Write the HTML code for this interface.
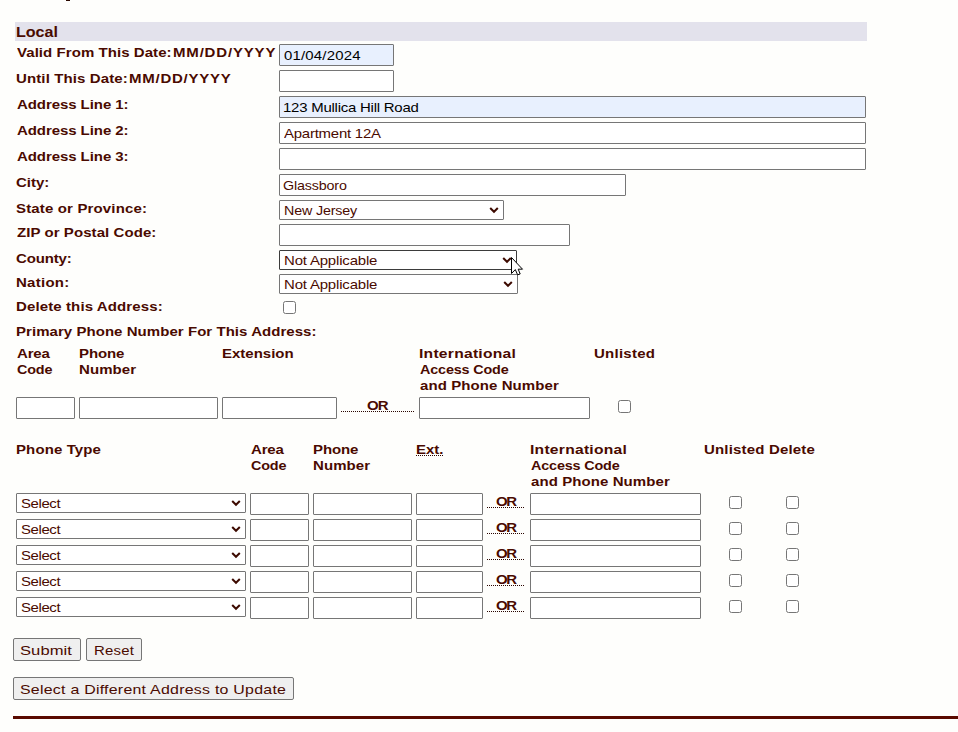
<!DOCTYPE html>
<html><head><meta charset="utf-8"><style>
html,body{margin:0;padding:0;}
body{width:958px;height:732px;overflow:hidden;position:relative;background:#fefefc;font-family:"Liberation Sans",sans-serif;}
.a{position:absolute;}
.t{position:absolute;white-space:nowrap;line-height:16px;transform-origin:0 0;}
.lab{font-weight:bold;font-size:12.5px;color:#4a0a00;}
.hdr{font-weight:bold;font-size:14px;color:#4a0a00;}
.inp{font-weight:normal;font-size:13.6px;color:#4a0a00;}
.box{position:absolute;box-sizing:border-box;border:1px solid #767676;border-radius:1px;background:#fff;}
.af{background:#e8f0fe;}
.cb{position:absolute;box-sizing:border-box;width:13px;height:13px;border:1px solid #767676;border-radius:2.5px;background:#fff;}
.btn{position:absolute;box-sizing:border-box;border:1px solid #767676;border-radius:2px;background:#efefef;}
.dot{position:absolute;height:0;border-bottom:1px dotted #2a0500;}
.chev{position:absolute;width:11px;height:8px;}

</style></head><body>

<div class="a hb" style="left:15px;top:22px;width:852px;height:19px;background:#e3e2ec"></div>
<div class="a hb" style="left:66px;top:0px;width:4px;height:1px;background:#2a0800"></div>
<div class="box af" style="left:279px;top:44px;width:115px;height:22px;"></div>
<div class="box" style="left:279px;top:70px;width:115px;height:22px;"></div>
<div class="box af" style="left:279px;top:96px;width:587px;height:22px;"></div>
<div class="box" style="left:279px;top:122px;width:587px;height:22px;"></div>
<div class="box" style="left:279px;top:148px;width:587px;height:22px;"></div>
<div class="box" style="left:279px;top:174px;width:347px;height:22px;"></div>
<div class="box" style="left:279px;top:224px;width:291px;height:22px;"></div>
<div class="box" style="left:279px;top:200px;width:225px;height:20px;"></div>
<svg class="chev" style="left:489px;top:206px" width="11" height="8" viewBox="0 0 11 8"><path d="M1.2 2 L5 5.8 L8.8 2" fill="none" stroke="#3d0a00" stroke-width="2" stroke-linecap="butt"/></svg>
<div class="box" style="left:279px;top:250px;width:238px;height:20px;border-color:#3b3b3b"></div>
<svg class="chev" style="left:502px;top:256px" width="11" height="8" viewBox="0 0 11 8"><path d="M1.2 2 L5 5.8 L8.8 2" fill="none" stroke="#3d0a00" stroke-width="2" stroke-linecap="butt"/></svg>
<div class="box" style="left:279px;top:274px;width:239px;height:20px;"></div>
<svg class="chev" style="left:503px;top:280px" width="11" height="8" viewBox="0 0 11 8"><path d="M1.2 2 L5 5.8 L8.8 2" fill="none" stroke="#3d0a00" stroke-width="2" stroke-linecap="butt"/></svg>
<div class="cb" style="left:283px;top:301px"></div>
<div class="box" style="left:16px;top:397px;width:59px;height:22px;"></div>
<div class="box" style="left:79px;top:397px;width:139px;height:22px;"></div>
<div class="box" style="left:222px;top:397px;width:115px;height:22px;"></div>
<div class="box" style="left:419px;top:397px;width:171px;height:22px;"></div>
<div class="cb" style="left:618px;top:400px"></div>
<div class="dot" style="left:341px;top:411px;width:73px"></div>
<div class="box" style="left:16px;top:493px;width:230px;height:20px;"></div>
<svg class="chev" style="left:231px;top:499px" width="11" height="8" viewBox="0 0 11 8"><path d="M1.2 2 L5 5.8 L8.8 2" fill="none" stroke="#3d0a00" stroke-width="2" stroke-linecap="butt"/></svg>
<div class="box" style="left:250px;top:493px;width:59px;height:22px;"></div>
<div class="box" style="left:313px;top:493px;width:99px;height:22px;"></div>
<div class="box" style="left:416px;top:493px;width:67px;height:22px;"></div>
<div class="box" style="left:530px;top:493px;width:171px;height:22px;"></div>
<div class="dot" style="left:487px;top:507px;width:37px"></div>
<div class="cb" style="left:729px;top:496px"></div>
<div class="cb" style="left:786px;top:496px"></div>
<div class="box" style="left:16px;top:519px;width:230px;height:20px;"></div>
<svg class="chev" style="left:231px;top:525px" width="11" height="8" viewBox="0 0 11 8"><path d="M1.2 2 L5 5.8 L8.8 2" fill="none" stroke="#3d0a00" stroke-width="2" stroke-linecap="butt"/></svg>
<div class="box" style="left:250px;top:519px;width:59px;height:22px;"></div>
<div class="box" style="left:313px;top:519px;width:99px;height:22px;"></div>
<div class="box" style="left:416px;top:519px;width:67px;height:22px;"></div>
<div class="box" style="left:530px;top:519px;width:171px;height:22px;"></div>
<div class="dot" style="left:487px;top:533px;width:37px"></div>
<div class="cb" style="left:729px;top:522px"></div>
<div class="cb" style="left:786px;top:522px"></div>
<div class="box" style="left:16px;top:545px;width:230px;height:20px;"></div>
<svg class="chev" style="left:231px;top:551px" width="11" height="8" viewBox="0 0 11 8"><path d="M1.2 2 L5 5.8 L8.8 2" fill="none" stroke="#3d0a00" stroke-width="2" stroke-linecap="butt"/></svg>
<div class="box" style="left:250px;top:545px;width:59px;height:22px;"></div>
<div class="box" style="left:313px;top:545px;width:99px;height:22px;"></div>
<div class="box" style="left:416px;top:545px;width:67px;height:22px;"></div>
<div class="box" style="left:530px;top:545px;width:171px;height:22px;"></div>
<div class="dot" style="left:487px;top:559px;width:37px"></div>
<div class="cb" style="left:729px;top:548px"></div>
<div class="cb" style="left:786px;top:548px"></div>
<div class="box" style="left:16px;top:571px;width:230px;height:20px;"></div>
<svg class="chev" style="left:231px;top:577px" width="11" height="8" viewBox="0 0 11 8"><path d="M1.2 2 L5 5.8 L8.8 2" fill="none" stroke="#3d0a00" stroke-width="2" stroke-linecap="butt"/></svg>
<div class="box" style="left:250px;top:571px;width:59px;height:22px;"></div>
<div class="box" style="left:313px;top:571px;width:99px;height:22px;"></div>
<div class="box" style="left:416px;top:571px;width:67px;height:22px;"></div>
<div class="box" style="left:530px;top:571px;width:171px;height:22px;"></div>
<div class="dot" style="left:487px;top:585px;width:37px"></div>
<div class="cb" style="left:729px;top:574px"></div>
<div class="cb" style="left:786px;top:574px"></div>
<div class="box" style="left:16px;top:597px;width:230px;height:20px;"></div>
<svg class="chev" style="left:231px;top:603px" width="11" height="8" viewBox="0 0 11 8"><path d="M1.2 2 L5 5.8 L8.8 2" fill="none" stroke="#3d0a00" stroke-width="2" stroke-linecap="butt"/></svg>
<div class="box" style="left:250px;top:597px;width:59px;height:22px;"></div>
<div class="box" style="left:313px;top:597px;width:99px;height:22px;"></div>
<div class="box" style="left:416px;top:597px;width:67px;height:22px;"></div>
<div class="box" style="left:530px;top:597px;width:171px;height:22px;"></div>
<div class="dot" style="left:487px;top:611px;width:37px"></div>
<div class="cb" style="left:729px;top:600px"></div>
<div class="cb" style="left:786px;top:600px"></div>
<div class="dot" style="left:416px;top:455px;width:27px"></div>
<div class="btn" style="left:13px;top:638px;width:68px;height:23px;"></div>
<div class="btn" style="left:86px;top:638px;width:56px;height:23px;"></div>
<div class="btn" style="left:13px;top:677px;width:281px;height:23px;"></div>
<div class="a hb" style="left:13px;top:716px;width:945px;height:3px;background:#5a0a00"></div>
<svg class="a cur" style="left:511px;top:257px" width="14" height="21" viewBox="0 0 14 21"><path d="M0.5 0.5 L0.5 16.5 L4.3 12.6 L6.6 17.8 L9.2 17 L7.2 12.2 L11.5 12.2 Z" fill="#fff" stroke="#000" stroke-width="1" stroke-linejoin="miter"/></svg>
<span id="t_local" class="t hdr" style="left:16.00px;top:24.00px;letter-spacing:-0.043px;transform:scaleX(1.15)">Local</span>
<span id="t_valid" class="t lab" style="left:17.00px;top:45.00px;letter-spacing:0.050px;transform:scaleX(1.2)">Valid From This Date:</span>
<span id="t_valid2" class="t lab" style="left:172.60px;top:45.00px;letter-spacing:0.685px;transform:scaleX(1.2)">MM/DD/YYYY</span>
<span id="t_until" class="t lab" style="left:16.00px;top:71.00px;letter-spacing:0.100px;transform:scaleX(1.2)">Until This Date:</span>
<span id="t_until2" class="t lab" style="left:129.00px;top:71.00px;letter-spacing:0.630px;transform:scaleX(1.2)">MM/DD/YYYY</span>
<span id="t_a1" class="t lab" style="left:17.00px;top:97.00px;letter-spacing:-0.060px;transform:scaleX(1.2)">Address Line 1:</span>
<span id="t_a2" class="t lab" style="left:17.00px;top:123.00px;letter-spacing:-0.060px;transform:scaleX(1.2)">Address Line 2:</span>
<span id="t_a3" class="t lab" style="left:17.00px;top:149.00px;letter-spacing:-0.060px;transform:scaleX(1.2)">Address Line 3:</span>
<span id="t_city" class="t lab" style="left:16.00px;top:175.00px;letter-spacing:0.000px;transform:scaleX(1.2)">City:</span>
<span id="t_state" class="t lab" style="left:16.00px;top:201.00px;letter-spacing:0.127px;transform:scaleX(1.2)">State or Province:</span>
<span id="t_zip" class="t lab" style="left:17.00px;top:225.00px;letter-spacing:0.056px;transform:scaleX(1.2)">ZIP or Postal Code:</span>
<span id="t_county" class="t lab" style="left:16.00px;top:251.00px;letter-spacing:-0.139px;transform:scaleX(1.2)">County:</span>
<span id="t_nation" class="t lab" style="left:16.00px;top:275.00px;letter-spacing:0.222px;transform:scaleX(1.2)">Nation:</span>
<span id="t_del" class="t lab" style="left:16.00px;top:299.00px;letter-spacing:0.096px;transform:scaleX(1.2)">Delete this Address:</span>
<span id="t_prim" class="t lab" style="left:16.00px;top:324.00px;letter-spacing:0.041px;transform:scaleX(1.2)">Primary Phone Number For This Address:</span>
<span id="t_area1" class="t lab" style="left:16.50px;top:345.50px;letter-spacing:-0.167px;transform:scaleX(1.2)">Area</span>
<span id="t_code1" class="t lab" style="left:16.50px;top:361.50px;letter-spacing:-0.152px;transform:scaleX(1.15)">Code</span>
<span id="t_ph1" class="t lab" style="left:78.50px;top:345.50px;letter-spacing:-0.083px;transform:scaleX(1.2)">Phone</span>
<span id="t_num1" class="t lab" style="left:78.50px;top:361.50px;letter-spacing:0.067px;transform:scaleX(1.2)">Number</span>
<span id="t_ext1" class="t lab" style="left:222.00px;top:345.50px;letter-spacing:0.000px;transform:scaleX(1.2)">Extension</span>
<span id="t_int1" class="t lab" style="left:419.00px;top:345.50px;letter-spacing:0.207px;transform:scaleX(1.25)">International</span>
<span id="t_acc1" class="t lab" style="left:420.00px;top:361.50px;letter-spacing:-0.137px;transform:scaleX(1.15)">Access Code</span>
<span id="t_and1" class="t lab" style="left:420.00px;top:377.50px;letter-spacing:0.067px;transform:scaleX(1.2)">and Phone Number</span>
<span id="t_unl1" class="t lab" style="left:594.00px;top:345.50px;letter-spacing:0.214px;transform:scaleX(1.2)">Unlisted</span>
<span id="t_or1" class="t lab" style="left:367.00px;top:397.60px;letter-spacing:-0.833px;transform:scaleX(1.2)">OR</span>
<span id="t_ptype" class="t lab" style="left:16.00px;top:441.80px;letter-spacing:0.093px;transform:scaleX(1.2)">Phone Type</span>
<span id="t_area2" class="t lab" style="left:250.50px;top:441.80px;letter-spacing:-0.167px;transform:scaleX(1.2)">Area</span>
<span id="t_code2" class="t lab" style="left:250.50px;top:457.80px;letter-spacing:-0.152px;transform:scaleX(1.15)">Code</span>
<span id="t_ph2" class="t lab" style="left:313.00px;top:441.80px;letter-spacing:-0.083px;transform:scaleX(1.2)">Phone</span>
<span id="t_num2" class="t lab" style="left:313.00px;top:457.80px;letter-spacing:0.067px;transform:scaleX(1.2)">Number</span>
<span id="t_ext2" class="t lab" style="left:416.00px;top:441.80px;letter-spacing:0.000px;transform:scaleX(1.2)">Ext.</span>
<span id="t_int2" class="t lab" style="left:529.50px;top:441.80px;letter-spacing:0.207px;transform:scaleX(1.25)">International</span>
<span id="t_acc2" class="t lab" style="left:530.50px;top:457.80px;letter-spacing:-0.137px;transform:scaleX(1.15)">Access Code</span>
<span id="t_and2" class="t lab" style="left:530.50px;top:473.80px;letter-spacing:0.067px;transform:scaleX(1.2)">and Phone Number</span>
<span id="t_unl2" class="t lab" style="left:704.00px;top:441.80px;letter-spacing:0.143px;transform:scaleX(1.2)">Unlisted Delete</span>
<span id="t_or2_0" class="t lab" style="left:495.50px;top:493.50px;letter-spacing:-1.167px;transform:scaleX(1.2)">OR</span>
<span id="t_sel_0" class="t inp" style="left:20.50px;top:495.70px;letter-spacing:-0.364px;transform:scaleX(1.1)">Select</span>
<span id="t_or2_1" class="t lab" style="left:495.50px;top:519.50px;letter-spacing:-1.167px;transform:scaleX(1.2)">OR</span>
<span id="t_sel_1" class="t inp" style="left:20.50px;top:521.70px;letter-spacing:-0.364px;transform:scaleX(1.1)">Select</span>
<span id="t_or2_2" class="t lab" style="left:495.50px;top:545.50px;letter-spacing:-1.167px;transform:scaleX(1.2)">OR</span>
<span id="t_sel_2" class="t inp" style="left:20.50px;top:547.70px;letter-spacing:-0.364px;transform:scaleX(1.1)">Select</span>
<span id="t_or2_3" class="t lab" style="left:495.50px;top:571.50px;letter-spacing:-1.167px;transform:scaleX(1.2)">OR</span>
<span id="t_sel_3" class="t inp" style="left:20.50px;top:573.70px;letter-spacing:-0.364px;transform:scaleX(1.1)">Select</span>
<span id="t_or2_4" class="t lab" style="left:495.50px;top:597.50px;letter-spacing:-1.167px;transform:scaleX(1.2)">OR</span>
<span id="t_sel_4" class="t inp" style="left:20.50px;top:599.70px;letter-spacing:-0.364px;transform:scaleX(1.1)">Select</span>
<span id="t_d1" class="t inp" style="left:284.00px;top:47.60px;letter-spacing:0.162px;transform:scaleX(1.1);color:#000">01/04/2024</span>
<span id="t_r1" class="t inp" style="left:283.00px;top:99.60px;letter-spacing:-0.209px;transform:scaleX(1.1);color:#000">123 Mullica Hill Road</span>
<span id="t_r2" class="t inp" style="left:283.50px;top:125.60px;letter-spacing:-0.212px;transform:scaleX(1.1)">Apartment 12A</span>
<span id="t_gl" class="t inp" style="left:283.00px;top:177.80px;letter-spacing:-0.144px;transform:scaleX(1.05)">Glassboro</span>
<span id="t_nj" class="t inp" style="left:284.00px;top:202.90px;letter-spacing:-0.146px;transform:scaleX(1.05)">New Jersey</span>
<span id="t_na1" class="t inp" style="left:283.75px;top:252.90px;letter-spacing:-0.154px;transform:scaleX(1.1)">Not Applicable</span>
<span id="t_na2" class="t inp" style="left:283.75px;top:276.90px;letter-spacing:-0.154px;transform:scaleX(1.1)">Not Applicable</span>
<span id="t_sub" class="t inp" style="left:20.00px;top:643.00px;letter-spacing:0.038px;transform:scaleX(1.22)">Submit</span>
<span id="t_res" class="t inp" style="left:94.00px;top:643.00px;letter-spacing:0.182px;transform:scaleX(1.1)">Reset</span>
<span id="t_diff" class="t inp" style="left:20.00px;top:682.20px;letter-spacing:0.218px;transform:scaleX(1.17)">Select a Different Address to Update</span>
</body></html>
